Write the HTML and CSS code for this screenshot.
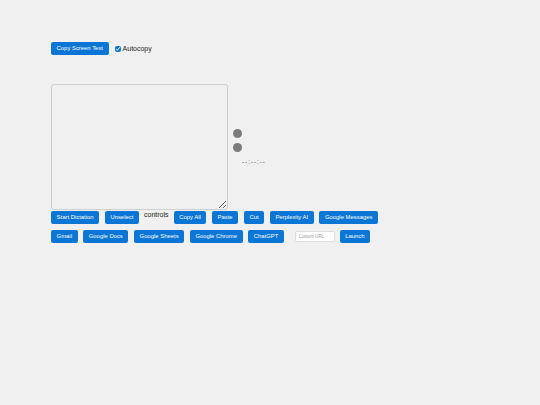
FILE: index.html
```html
<!DOCTYPE html>
<html>
<head>
<meta charset="utf-8">
<link rel="stylesheet" href="styles.css">
</head>
<body>
<div class="page">
  <div class="top">
    <button class="btn">Copy Screen Text</button>
    <label class="check"><input type="checkbox" checked> Autocopy</label>
  </div>
  <div class="editor">
    <textarea class="text"></textarea>
    <div class="status">
      <span class="dot"></span>
      <span class="dot"></span>
      <span class="time">--:--:--</span>
    </div>
  </div>
  <div class="row row1">
    <button class="btn">Start Dictation</button>
    <button class="btn">Unselect</button>
    <span class="controls">controls</span>
    <button class="btn">Copy All</button>
    <button class="btn">Paste</button>
    <button class="btn">Cut</button>
    <button class="btn">Perplexity AI</button>
    <button class="btn">Google Messages</button>
  </div>
  <div class="row row2">
    <button class="btn">Gmail</button>
    <button class="btn">Google Docs</button>
    <button class="btn">Google Sheets</button>
    <button class="btn">Google Chrome</button>
    <button class="btn">ChatGPT</button>
    <input class="url" type="text" placeholder="Custom URL">
    <button class="btn">Launch</button>
  </div>
</div>
</body>
</html>
```
FILE: styles.css
```css
html, body {
  margin: 0;
  background: #f0f0f0;
  font-family: "Liberation Sans", Arial, sans-serif;
}
.page {
  padding: 42px 0 0 51px;
}
.btn {
  background: #0b76d6;
  color: #fff;
  border: none;
  border-radius: 2px;
  font-family: "Liberation Sans", Arial, sans-serif;
  font-size: 5.9px;
  height: 13px;
  line-height: 13px;
  padding: 0 5.6px;
  margin: 0;
  white-space: nowrap;
}
.top {
  display: flex;
  align-items: center;
  gap: 6px;
}
.check {
  display: flex;
  align-items: center;
  gap: 2px;
  font-size: 7px;
  color: #222;
}
.check input {
  width: 6px;
  height: 6px;
  margin: 0;
  accent-color: #0b76d6;
}
.editor {
  display: flex;
  align-items: center;
  gap: 5px;
  margin-top: 29px;
}
.text {
  width: 177px;
  height: 126px;
  box-sizing: border-box;
  border: 1px solid #cfcfcf;
  border-radius: 3px;
  background: #f0f0f0;
  margin: 0;
  resize: both;
}
.status {
  display: flex;
  flex-direction: column;
  align-items: flex-start;
  gap: 5px;
}
.dot {
  width: 9px;
  height: 9px;
  border-radius: 50%;
  background: #7a7a7a;
}
.time {
  margin-left: 9px;
  margin-top: 1px;
  font-size: 6.5px;
  color: #666;
  letter-spacing: 0.9px;
}
.row {
  display: flex;
  align-items: flex-start;
  gap: 5.6px;
}
.row1 {
  margin-top: 1px;
}
.row2 {
  margin-top: 6px;
  align-items: center;
}
.controls {
  font-size: 7px;
  color: #222;
  line-height: 8px;
  margin: 0 -0.5px;
}
.url {
  width: 40px;
  height: 11px;
  box-sizing: border-box;
  margin: 0 -0.5px 0 5px;
  padding: 0 3px;
  border: 1px solid #ddd;
  border-radius: 2px;
  background: #fff;
  font-size: 4.5px;
  font-family: "Liberation Sans", Arial, sans-serif;
}
.url::placeholder {
  color: #999;
}
```
